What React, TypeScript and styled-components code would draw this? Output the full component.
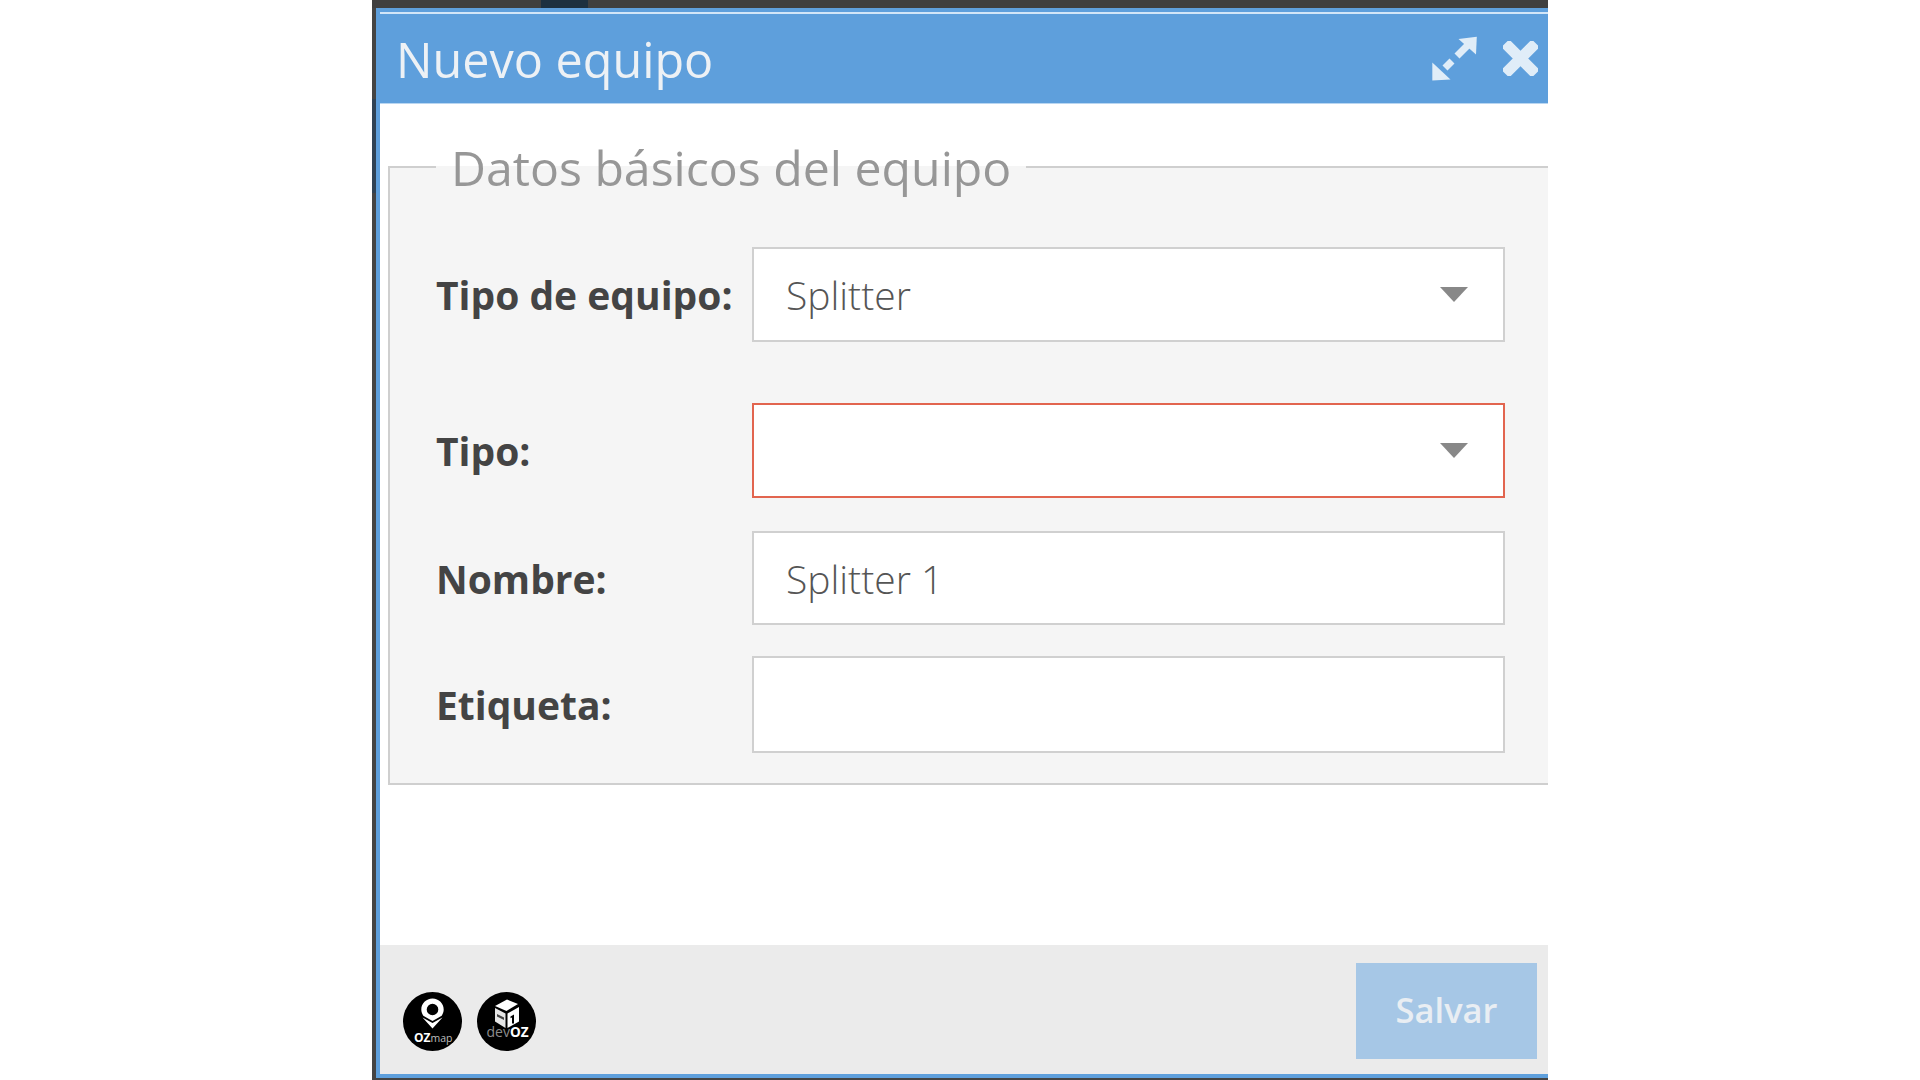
import styled, { createGlobalStyle } from "styled-components";

const GlobalStyle = createGlobalStyle`
  html, body {
    margin: 0;
    padding: 0;
    background: #fff;
    font-family: "Open Sans", "Noto Sans", sans-serif;
  }
  * {
    box-sizing: border-box;
  }
`;

const Page = styled.div`
  height: 100vh;
  display: flex;
  justify-content: center;
  overflow: hidden;
`;

const Frame = styled.div`
  width: 1176px;
  height: 1080px;
  padding: 0 0 2px 4px;
  display: flex;
  flex-direction: column;
  background: linear-gradient(to bottom, #444 0 99px, #2f4254 99px 193px, #444 193px);
`;

const TopStrip = styled.div`
  height: 8px;
  margin-left: -4px;
  flex-shrink: 0;
  background: #3f3f3f;
`;

const StripTab = styled.div`
  width: 47px;
  height: 8px;
  margin-left: 169px;
  background: #1d3040;
`;

const Dialog = styled.div`
  flex: 1;
  min-height: 0;
  display: flex;
  flex-direction: column;
  border: 4px solid #5e9fdc;
  border-right: none;
  background: #fff;
  overflow: hidden;
`;

const Header = styled.header`
  height: 92px;
  flex-shrink: 0;
  display: flex;
  align-items: center;
  justify-content: space-between;
  padding: 0 10px 0 16px;
  background: #5e9fdc;
  border-top: 2px solid #d3e6f8;
  border-bottom: 1px solid #b9d6f1;
`;

const Title = styled.h1`
  margin: 0;
  font-size: 48.5px;
  font-weight: 400;
  line-height: 62px;
  color: #edf1f5;
`;

const HeaderIcons = styled.div`
  display: flex;
  align-items: center;
  gap: 26px;
`;

const Body = styled.main`
  flex: 1;
  min-height: 0;
  overflow: hidden;
`;

const Fieldset = styled.fieldset`
  margin: 30px -4px 0 8px;
  padding: 47px 0 30px 46px;
  min-width: 0;
  border: 2px solid #cfcfcf;
  background: #f5f5f5;
`;

const Legend = styled.legend`
  padding: 0 15px 0 15px;
  font-size: 48.2px;
  font-weight: 400;
  line-height: 66px;
  color: #979797;
`;

const Row = styled.div<{ $top?: number }>`
  display: flex;
  align-items: center;
  margin-top: ${(p) => p.$top ?? 0}px;
`;

const Label = styled.label`
  width: 316px;
  flex-shrink: 0;
  font-size: 39px;
  font-weight: 700;
  color: #444;
`;

const Select = styled.div<{ $invalid?: boolean }>`
  width: 753px;
  height: 95px;
  display: flex;
  align-items: center;
  justify-content: space-between;
  padding: 0 35px 0 32px;
  background: #fff;
  border: 2px solid ${(p) => (p.$invalid ? "#e2654f" : "#d0d0d0")};
`;

const Value = styled.span`
  font-size: 39px;
  font-weight: 300;
  color: #555;
`;

const Caret = styled.span`
  width: 0;
  height: 0;
  border-left: 14px solid transparent;
  border-right: 14px solid transparent;
  border-top: 15px solid #888;
`;

const TextInput = styled.input<{ $height: number }>`
  width: 753px;
  height: ${(p) => p.$height}px;
  padding: 0 32px;
  background: #fff;
  border: 2px solid #d0d0d0;
  border-radius: 0;
  outline: none;
  font-family: inherit;
  font-size: 39px;
  font-weight: 300;
  color: #555;
`;

const Footer = styled.footer`
  height: 129px;
  flex-shrink: 0;
  display: flex;
  align-items: flex-start;
  justify-content: space-between;
  padding: 18px 11px 0 23px;
  background: #ebebeb;
`;

const Logos = styled.div`
  display: flex;
  gap: 15px;
  margin-top: 29px;
`;

const SaveButton = styled.button`
  width: 181px;
  height: 96px;
  padding: 0 0 3px;
  border: none;
  background: #a6c7e6;
  color: #e9eef3;
  font-family: inherit;
  font-size: 34.5px;
  font-weight: 600;
`;

const ExpandIcon = () => (
  <svg width="45" height="45" viewBox="0 0 45 45" fill="#e0edf8">
    <polygon points="26.5,3 44.8,0.7 44,18.500" />
    <polygon points="0.3,26.500 0.3,44.500 18.500,43.500" />
    <line x1="25" y1="20" x2="36" y2="9" stroke="#e0edf8" strokeWidth="7" />
    <line x1="13" y1="32" x2="20" y2="25" stroke="#e0edf8" strokeWidth="7" />
  </svg>
);

const CloseIcon = () => (
  <svg width="35" height="35" viewBox="0 0 35 35" fill="#e0edf8">
    <rect x="-4" y="12" width="43" height="11" rx="2" transform="rotate(45 17.5 17.5)" />
    <rect x="-4" y="12" width="43" height="11" rx="2" transform="rotate(-45 17.5 17.5)" />
  </svg>
);

const OzMapLogo = () => (
  <svg width="59" height="59" viewBox="0 0 59 59">
    <circle cx="29.5" cy="29.5" r="29.5" fill="#000" />
    <path
      fill="#fff"
      fillRule="evenodd"
      d="M29.5 6.5c6.4 0 11.2 5 11.2 11 0 2.400-.8 4.400-2 6.300L29.500 29 20.300 23.800c-1.200-1.900-2-3.900-2-6.300 0-6 4.800-11 11.200-11zm0 5.200a5.800 5.800 0 1 0 0 11.600 5.800 5.800 0 0 0 0-11.600z"
    />
    <path fill="#fff" d="M19.500 25.500 29.500 31 39.500 25.500 29.500 36.500z" />
    <text x="11" y="49.500" fontFamily="Open Sans, sans-serif" fontSize="12" fontWeight="700" fill="#fff">
      OZ
      <tspan fontWeight="400" fontSize="10.500" fill="#bdbdbd">
        map
      </tspan>
    </text>
  </svg>
);

const DevOzLogo = () => (
  <svg width="59" height="59" viewBox="0 0 59 59">
    <circle cx="29.5" cy="29.5" r="29.500" fill="#000" />
    <path fill="#fff" d="M18 14 30 7.500 41 12 29.500 19z" />
    <path fill="#e6e6e6" d="M18 16 28.500 21.500V36L18 29.500z" />
    <path fill="#444" d="M20 22 27 25.500V28L20 24.500z" />
    <path fill="#fff" d="M30.500 21.500 42 15V29.500L30.500 36z" />
    <path fill="#000" d="M33.500 24.500 37 22.500V31.500H35V25.500L33.500 26.300z" />
    <text x="9.500" y="45" fontFamily="Open Sans, sans-serif" fontSize="14" fontWeight="400" fill="#8c8c8c">
      dev
      <tspan fontWeight="700" fontSize="13.500" fill="#fff">
        OZ
      </tspan>
    </text>
  </svg>
);

const App = () => {
  return (
    <Page>
      <GlobalStyle />
      <Frame>
        <TopStrip>
          <StripTab />
        </TopStrip>
        <Dialog>
          <Header>
            <Title>Nuevo equipo</Title>
            <HeaderIcons>
              <ExpandIcon />
              <CloseIcon />
            </HeaderIcons>
          </Header>
          <Body>
            <Fieldset>
              <Legend>Datos básicos del equipo</Legend>
              <Row>
                <Label>Tipo de equipo:</Label>
                <Select>
                  <Value>Splitter</Value>
                  <Caret />
                </Select>
              </Row>
              <Row $top={61}>
                <Label>Tipo:</Label>
                <Select $invalid>
                  <Value />
                  <Caret />
                </Select>
              </Row>
              <Row $top={33}>
                <Label>Nombre:</Label>
                <TextInput $height={94} defaultValue="Splitter 1" />
              </Row>
              <Row $top={31}>
                <Label>Etiqueta:</Label>
                <TextInput $height={97} defaultValue="" />
              </Row>
            </Fieldset>
          </Body>
          <Footer>
            <Logos>
              <OzMapLogo />
              <DevOzLogo />
            </Logos>
            <SaveButton>Salvar</SaveButton>
          </Footer>
        </Dialog>
      </Frame>
    </Page>
  );
};

export default App;
